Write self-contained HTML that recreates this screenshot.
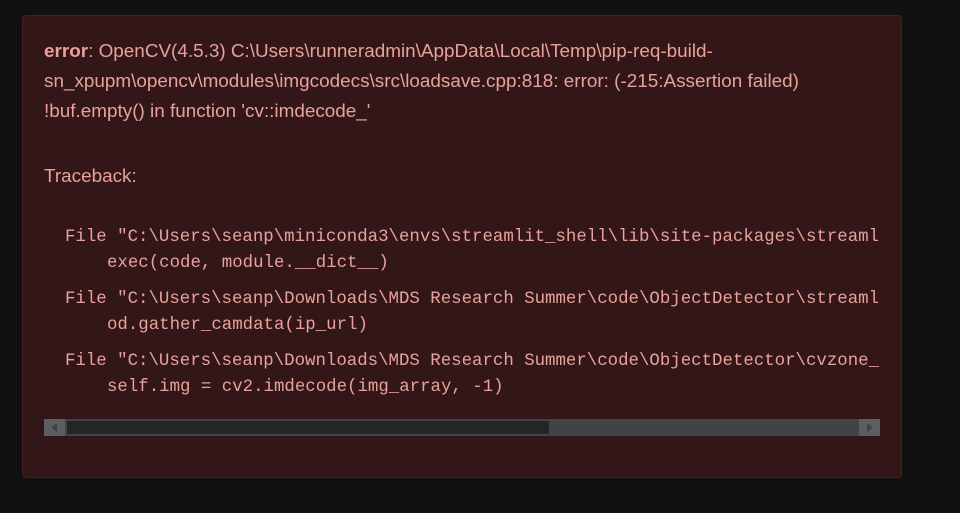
<!DOCTYPE html>
<html><head><meta charset="utf-8"><style>
html,body{margin:0;padding:0;background:#111111;width:960px;height:513px;overflow:hidden}
.box{position:absolute;left:22px;top:15px;width:880px;height:463px;background:#331618;border:1px solid #4a1e20;border-radius:4px;box-sizing:border-box}
.t{position:absolute;left:44px;color:#e8a19b;font-family:"Liberation Sans",sans-serif;font-size:18.9px;white-space:nowrap;line-height:30px}
.m{position:absolute;color:#e8a19b;font-family:"Liberation Mono",monospace;font-size:17.4px;white-space:pre;line-height:26px}
.sb{position:absolute;left:44px;top:419px;width:836px;height:17px;background:#3f4446}
.th{position:absolute;left:67px;top:421px;width:482px;height:13px;background:#252525}
.ar{position:absolute;top:419px;width:21px;height:17px;background:#5b5f61}
</style></head><body>
<div class="box"></div>
<div class="t" style="top:37px"><b>error</b>: OpenCV(4.5.3) C:\Users\runneradmin\AppData\Local\Temp\pip-req-build-</div>
<div class="t" style="top:67px">sn_xpupm\opencv\modules\imgcodecs\src\loadsave.cpp:818: error: (-215:Assertion failed)</div>
<div class="t" style="top:97px">!buf.empty() in function 'cv::imdecode_'</div>
<div class="t" style="top:162px">Traceback:</div>
<div style="position:absolute;left:44px;top:225px;width:836px;height:190px;overflow:hidden">
<div class="m" style="left:21px;top:0">File "C:\Users\seanp\miniconda3\envs\streamlit_shell\lib\site-packages\streamlit\script_runner.py"</div>
<div class="m" style="left:63px;top:26px">exec(code, module.__dict__)</div>
<div class="m" style="left:21px;top:62px">File "C:\Users\seanp\Downloads\MDS Research Summer\code\ObjectDetector\streamlit_app.py"</div>
<div class="m" style="left:63px;top:88px">od.gather_camdata(ip_url)</div>
<div class="m" style="left:21px;top:124px">File "C:\Users\seanp\Downloads\MDS Research Summer\code\ObjectDetector\cvzone_od.py"</div>
<div class="m" style="left:63px;top:150px">self.img = cv2.imdecode(img_array, -1)</div>
</div>
<div class="sb"></div>
<div class="th"></div>
<div class="ar" style="left:44px"><svg width="21" height="17"><polygon points="13,4 7,8.5 13,13" fill="#3f4446"/></svg></div>
<div class="ar" style="left:859px"><svg width="21" height="17"><polygon points="8,4 14,8.5 8,13" fill="#3f4446"/></svg></div>
</body></html>
